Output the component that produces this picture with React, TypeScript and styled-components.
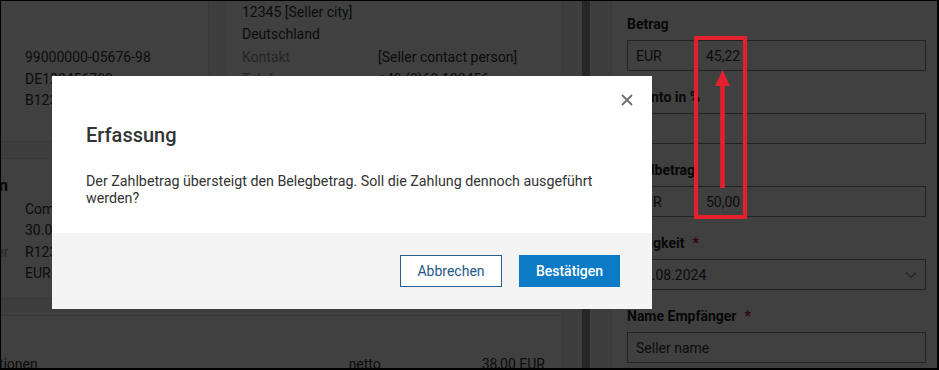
import styled, { createGlobalStyle } from "styled-components";

const GlobalStyle = createGlobalStyle`
  html, body {
    margin: 0;
    padding: 0;
    background: #000;
  }
  body {
    font-family: Roboto, "Noto Sans", sans-serif;
    color: #333;
  }
  * {
    box-sizing: border-box;
  }
`;

type Row = { label?: string; value: string };

const sellerTax: Row[] = [
  { label: "Steuernummer", value: "99000000-05676-98" },
  { label: "USt-IdNr.", value: "DE123456789" },
  { label: "Leitweg-ID", value: "B12345-678" },
];

const invoiceRows: Row[] = [
  { label: "Art", value: "Commercial invoice (380)" },
  { label: "Datum", value: "30.07.2024" },
  { label: "Rechnungsnummer", value: "R12345" },
  { label: "Währung", value: "EUR" },
];

export default function App() {
  return (
    <>
      <GlobalStyle />
      <Frame>
        <Page>
          <Main>
            <CardRow $height={151}>
              <Card $padTop={55}>
                <InfoGrid $labelWidth={128}>
                  {sellerTax.map((r) => (
                    <Line key={r.value}>
                      <Label>{r.label}</Label>
                      <Value>{r.value}</Value>
                    </Line>
                  ))}
                </InfoGrid>
              </Card>
              <Card $padTop={10} $padLeft={16}>
                <InfoGrid $labelWidth={130}>
                  <Line>
                    <Value $span>12345 [Seller city]</Value>
                  </Line>
                  <Line>
                    <Value $span>Deutschland</Value>
                  </Line>
                  <Line $gap={2}>
                    <Label>Kontakt</Label>
                    <Value>[Seller contact person]</Value>
                  </Line>
                  <Line>
                    <Label>Telefon</Label>
                    <Value>+49 (0)69 123456</Value>
                  </Line>
                  <Line>
                    <Label>E-Mail</Label>
                    <Value>seller@example.com</Value>
                  </Line>
                </InfoGrid>
              </Card>
            </CardRow>
            <CardRow $height={141}>
              <Card $padTop={16} $padLeft={16}>
                <CardTitle>Rechnungsdaten</CardTitle>
                <InfoGrid $labelWidth={132}>
                  {invoiceRows.map((r) => (
                    <Line key={r.value}>
                      <Label>{r.label}</Label>
                      <Value>{r.value}</Value>
                    </Line>
                  ))}
                </InfoGrid>
              </Card>
              <Card $padTop={16} $padLeft={16}>
                <CardTitle>Käufer</CardTitle>
              </Card>
            </CardRow>
            <Card $padTop={38} $padLeft={32}>
              <TotalsLine>
                <span>Rechnungspositionen</span>
                <span>netto</span>
                <span>38,00 EUR</span>
              </TotalsLine>
            </Card>
          </Main>
          <Gutter>
            <ScrollTrack />
          </Gutter>
          <Aside>
            <Field>
              <FieldLabel>Betrag</FieldLabel>
              <InputBox>
                <Currency>EUR</Currency>
                <span>45,22</span>
              </InputBox>
            </Field>
            <Field>
              <FieldLabel>Skonto in %</FieldLabel>
              <InputBox />
            </Field>
            <Field>
              <FieldLabel>Zahlbetrag</FieldLabel>
              <InputBox>
                <Currency>EUR</Currency>
                <span>50,00</span>
              </InputBox>
            </Field>
            <Field>
              <FieldLabel>
                Fälligkeit<Required>*</Required>
              </FieldLabel>
              <InputBox $select>
                <span>15.08.2024</span>
                <svg width="12" height="8" viewBox="0 0 12 8" fill="none">
                  <path d="M1 1.5l5 5 5-5" stroke="#8a8a8a" strokeWidth="1.2" />
                </svg>
              </InputBox>
            </Field>
            <Field>
              <FieldLabel>
                Name Empfänger<Required>*</Required>
              </FieldLabel>
              <InputBox>Seller name</InputBox>
            </Field>
          </Aside>
        </Page>

        <Backdrop />

        <Annotation width="54" height="184" viewBox="0 0 54 184">
          <rect x="2" y="2" width="49" height="179" fill="none" stroke="#e5202e" strokeWidth="4" />
          <line x1="28.5" y1="152" x2="28.5" y2="48" stroke="#e5202e" strokeWidth="4.5" />
          <polygon points="28.5,34 21,50 36,50" fill="#e5202e" />
        </Annotation>

        <Dialog>
          <CloseButton aria-label="Schließen">
            <svg width="12" height="12" viewBox="0 0 12 12">
              <path d="M1 1l10 10M11 1L1 11" stroke="#6f6f6f" strokeWidth="1.8" />
            </svg>
          </CloseButton>
          <DialogBody>
            <DialogTitle>Erfassung</DialogTitle>
            <DialogText>
              Der Zahlbetrag übersteigt den Belegbetrag. Soll die Zahlung dennoch ausgeführt
              werden?
            </DialogText>
          </DialogBody>
          <DialogFooter>
            <Button $width={102}>Abbrechen</Button>
            <Button $primary $width={101}>
              Bestätigen
            </Button>
          </DialogFooter>
        </Dialog>
      </Frame>
    </>
  );
}

const Frame = styled.div`
  position: relative;
  width: 939px;
  height: 370px;
  overflow: hidden;
  border-style: solid;
  border-color: #000;
  border-width: 1px 2px 2px 1px;
  background: #f5f5f5;
`;

const Page = styled.div`
  display: flex;
  height: 100%;
`;

const Main = styled.div`
  flex: none;
  width: 693px;
  margin: -10px 0 0 -131px;
  display: flex;
  flex-direction: column;
  gap: 16px;
  & > * {
    flex-shrink: 0;
  }
`;

const CardRow = styled.div<{ $height: number }>`
  display: grid;
  grid-template-columns: 339px 338px;
  column-gap: 16px;
  height: ${(p) => p.$height}px;
`;

const Card = styled.section<{ $padTop: number; $padLeft?: number }>`
  background: #fff;
  border: 1px solid #e2e2e2;
  padding: ${(p) => p.$padTop}px 17px 14px ${(p) => p.$padLeft ?? 20}px;
  overflow: hidden;
  font-size: 14px;
  color: #333;
`;

const CardTitle = styled.h3`
  margin: 0 0 1.5px;
  font-size: 16px;
  line-height: 22px;
  font-weight: 700;
  color: #222;
`;

const InfoGrid = styled.div<{ $labelWidth: number }>`
  display: grid;
  grid-template-columns: ${(p) => p.$labelWidth}px 1fr;
  column-gap: 6px;
`;

const Line = styled.div<{ $gap?: number }>`
  display: contents;
  & > * {
    margin-top: ${(p) => p.$gap ?? 0}px;
  }
`;

const Label = styled.span`
  line-height: 21.5px;
  color: #999;
  white-space: nowrap;
`;

const Value = styled.span<{ $span?: boolean }>`
  line-height: 21.5px;
  color: #333;
  white-space: nowrap;
  grid-column: ${(p) => (p.$span ? "1 / -1" : "auto")};
`;

const TotalsLine = styled.div`
  display: grid;
  grid-template-columns: 1fr 133px auto;
  line-height: 21.5px;
  color: #333;
`;

const Gutter = styled.div`
  flex: none;
  width: 48px;
  padding-left: 19px;
`;

const ScrollTrack = styled.div`
  width: 8px;
  height: 100%;
  background: #9a9a9a;
`;

const Aside = styled.aside`
  flex: 1;
  background: #fff;
  border-left: 1px solid #e6e6e6;
  padding: 13px 11px 0 15px;
`;

const Field = styled.div`
  margin-bottom: 16px;
`;

const FieldLabel = styled.div`
  font-size: 14px;
  line-height: 20px;
  font-weight: 700;
  color: #222;
  margin-bottom: 6px;
`;

const Required = styled.span`
  color: #d0101e;
  margin-left: 8px;
`;

const InputBox = styled.div<{ $select?: boolean }>`
  height: 31px;
  border: 1px solid #8c8c8c;
  display: flex;
  align-items: center;
  justify-content: ${(p) => (p.$select ? "space-between" : "flex-start")};
  padding: 0 8px;
  font-size: 14px;
  color: #333;
`;

const Currency = styled.span`
  width: 70px;
`;

const Backdrop = styled.div`
  position: absolute;
  inset: 0;
  background: rgba(0, 0, 0, 0.75);
`;

const Annotation = styled.svg`
  position: absolute;
  left: 693px;
  top: 35px;
`;

const Dialog = styled.div`
  position: absolute;
  left: 51px;
  top: 75px;
  width: 600px;
  height: 233px;
  background: #fff;
  display: flex;
  flex-direction: column;
`;

const CloseButton = styled.button`
  position: absolute;
  top: 13px;
  right: 14px;
  width: 22px;
  height: 22px;
  padding: 0;
  border: none;
  background: none;
  display: flex;
  align-items: center;
  justify-content: center;
  cursor: pointer;
`;

const DialogBody = styled.div`
  flex: 1;
  padding: 46px 34px 0;
`;

const DialogTitle = styled.h2`
  margin: 0 0 25px;
  font-size: 20px;
  line-height: 26px;
  font-weight: 500;
  color: #333;
`;

const DialogText = styled.p`
  margin: 0;
  font-size: 14.25px;
  line-height: 17px;
  color: #333;
`;

const DialogFooter = styled.div`
  height: 76px;
  background: #f4f4f4;
  display: flex;
  align-items: center;
  justify-content: flex-end;
  gap: 17px;
  padding: 0 32px;
`;

const Button = styled.button<{ $primary?: boolean; $width: number }>`
  width: ${(p) => p.$width}px;
  height: 32px;
  font-family: inherit;
  font-size: 14px;
  font-weight: ${(p) => (p.$primary ? 500 : 400)};
  border: 1px solid ${(p) => (p.$primary ? "#0a7bc4" : "#2b5e8c")};
  background: ${(p) => (p.$primary ? "#0a7bc4" : "#fff")};
  color: ${(p) => (p.$primary ? "#fff" : "#245985")};
  cursor: pointer;
`;
